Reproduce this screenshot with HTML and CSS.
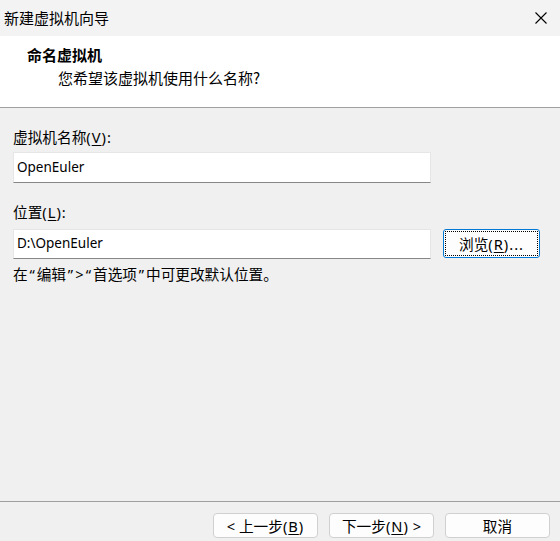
FILE: index.html
```html
<!DOCTYPE html>
<html lang="zh-CN">
<head>
<meta charset="utf-8">
<title>新建虚拟机向导</title>
<link rel="stylesheet" href="styles.css">
</head>
<body>
<div class="window">
  <div class="titlebar">
    <span class="title">新建虚拟机向导</span>
    <svg class="close" width="12" height="12" viewBox="0 0 12 12"><path d="M0.5 0.5 L11.5 11.5 M11.5 0.5 L0.5 11.5" stroke="#000" stroke-width="1.1" fill="none"/></svg>
  </div>
  <div class="header">
    <div class="h-title">命名虚拟机</div>
    <div class="h-sub">您希望该虚拟机使用什么名称?</div>
  </div>
  <div class="main">
    <div class="label first">虚拟机名称<span class="lat">(<u>V</u>):</span></div>
    <div class="input tall">OpenEuler</div>
    <div class="label second">位置<span class="lat">(<u>L</u>):</span></div>
    <div class="row">
      <div class="input">D:\OpenEuler</div>
      <button class="browse"><span class="focus">浏览<span class="lat">(<u>R</u>)...</span></span></button>
    </div>
    <div class="hint">在<span class="q">“</span>编辑<span class="q">”</span><span class="q">&gt;</span><span class="q">“</span>首选项<span class="q">”</span>中可更改默认位置。</div>
  </div>
  <div class="footer">
    <button class="btn">&lt; 上一步<span class="lat">(<u>B</u>)</span></button>
    <button class="btn">下一步<span class="lat">(<u>N</u>)</span> &gt;</button>
    <button class="btn">取消</button>
  </div>
</div>
</body>
</html>
```
FILE: styles.css
```css
html, body {
  margin: 0;
  padding: 0;
}
body {
  width: 560px;
  height: 541px;
  overflow: hidden;
  background: #f0f0f0;
  font-family: "Noto Sans", "Noto Sans CJK SC", sans-serif;
  font-size: 14.67px;
  color: #000;
}
.window {
  display: flex;
  flex-direction: column;
  height: 541px;
}
.titlebar {
  height: 36px;
  background: #f3f3f3;
  display: flex;
  align-items: center;
  justify-content: space-between;
  padding: 0 13px 0 4px;
}
.title {
  font-size: 15px;
  line-height: 20px;
  font-family: "Noto Sans CJK SC", sans-serif;
}
.close {
  display: block;
}
.header {
  height: 71px;
  background: #fff;
  border-bottom: 1px solid #a0a0a0;
  box-sizing: content-box;
}
.h-title {
  font-family: "Noto Sans CJK SC", sans-serif;
  font-weight: 700;
  font-size: 15px;
  line-height: 20px;
  padding: 9px 0 0 27px;
}
.h-sub {
  font-family: "Noto Sans CJK SC", sans-serif;
  font-size: 15px;
  line-height: 20px;
  padding: 3px 0 0 58px;
}
.main {
  flex: 1;
  padding: 0 20px 0 13px;
  display: flex;
  flex-direction: column;
}
.lat {
  letter-spacing: 1px;
}
.label {
  line-height: 20px;
  height: 20px;
}
.label.first { margin-top: 19px; }
.label.second { margin-top: 19px; }
.input {
  box-sizing: border-box;
  width: 418px;
  height: 30px;
  background: #fff;
  border: 1px solid #e6e6e6;
  border-bottom: 1px solid #868686;
  padding-left: 3px;
  line-height: 27px;
  font-size: 13.5px;
}
.input.tall {
  height: 31px;
  margin-top: 5px;
  line-height: 28px;
}
.row {
  display: flex;
  align-items: flex-start;
  gap: 12px;
  margin-top: 7px;
}
.browse {
  box-sizing: border-box;
  width: 97px;
  height: 29px;
  background: #fdfdfd;
  border: 1px solid #0078d4;
  border-radius: 3px;
  padding: 1px;
  font-family: "Noto Sans", "Noto Sans CJK SC", sans-serif;
  font-size: 14.67px;
  color: #000;
  display: flex;
}
.focus {
  flex: 1;
  border: 1px dotted #000;
  display: flex;
  align-items: center;
  justify-content: center;
  line-height: 20px;
}
.hint {
  margin-top: 5px;
  line-height: 20px;
}
.q {
  display: inline-block;
  width: 9px;
  text-align: center;
}
.footer {
  border-top: 1px solid #a0a0a0;
  height: 40px;
  display: flex;
  justify-content: flex-end;
  align-items: flex-start;
  gap: 11px;
  padding: 11px 10px 0 0;
  box-sizing: border-box;
}
.btn {
  box-sizing: border-box;
  width: 105px;
  height: 25px;
  background: #fdfdfd;
  border: 1px solid #d0d0d0;
  border-radius: 4px;
  font-family: "Noto Sans", "Noto Sans CJK SC", sans-serif;
  font-size: 14.67px;
  color: #000;
  padding: 0;
  line-height: 22px;
}
u {
  text-decoration: underline;
  text-underline-offset: 2px;
}
```
